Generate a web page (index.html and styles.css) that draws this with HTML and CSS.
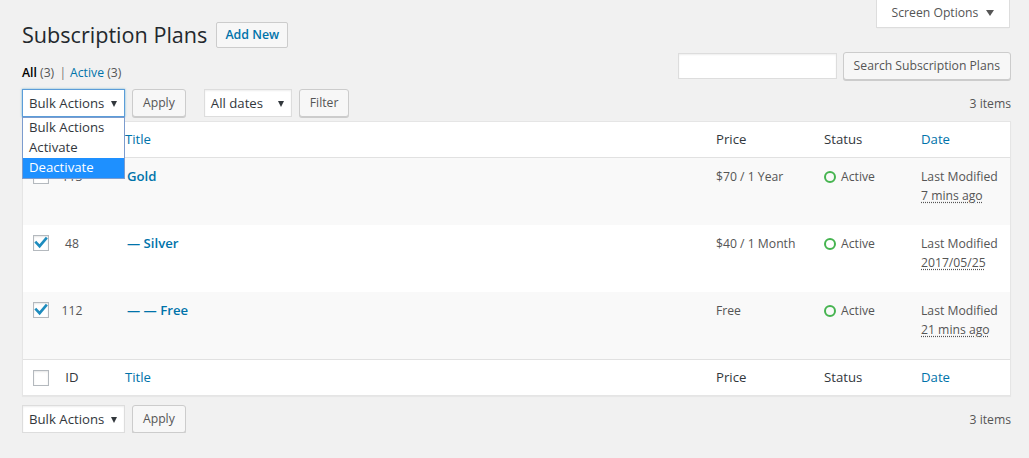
FILE: index.html
```html
<!DOCTYPE html>
<html lang="en">
<head>
<meta charset="utf-8">
<title>Subscription Plans</title>
<link rel="stylesheet" href="styles.css">
</head>
<body>
<div class="wrap">
  <header class="page-header">
    <div class="title-group">
      <h1>Subscription Plans</h1>
      <a class="page-title-action" href="#">Add New</a>
    </div>
    <button class="screen-options" type="button">Screen Options <span class="caret"></span></button>
  </header>

  <div class="filter-row">
    <ul class="subsubsub">
      <li><a class="current" href="#">All</a> <span class="count">(3)</span> <span class="sep">|</span></li>
      <li><a href="#">Active</a> <span class="count">(3)</span></li>
    </ul>
    <div class="search-box">
      <input type="search" class="search-input" aria-label="Search">
      <button class="button" type="button">Search Subscription Plans</button>
    </div>
  </div>

  <div class="tablenav top">
    <div class="actions">
      <div class="select-wrap is-open">
        <div class="select focused">Bulk Actions<span class="arrow"></span></div>
        <ul class="dropdown">
          <li>Bulk Actions</li>
          <li>Activate</li>
          <li class="highlight">Deactivate</li>
        </ul>
      </div>
      <button class="button" type="button">Apply</button>
    </div>
    <div class="actions">
      <div class="select-wrap">
        <div class="select dates">All dates<span class="arrow"></span></div>
      </div>
      <button class="button" type="button">Filter</button>
    </div>
    <div class="displaying-num">3 items</div>
  </div>

  <table class="list-table">
    <colgroup>
      <col class="c-cb"><col class="c-id"><col class="c-title"><col class="c-price"><col class="c-status"><col class="c-date">
    </colgroup>
    <thead>
      <tr>
        <th class="check-column"><span class="cb"></span></th>
        <th class="col-id">ID</th>
        <th class="col-title"><a href="#">Title</a></th>
        <th>Price</th>
        <th>Status</th>
        <th><a href="#">Date</a></th>
      </tr>
    </thead>
    <tbody>
      <tr class="alt">
        <td class="check-column"><span class="cb"></span></td>
        <td class="col-id">113</td>
        <td class="col-title"><a class="row-title" href="#">Gold</a></td>
        <td>$70 / 1 Year</td>
        <td><span class="status"><span class="ring"></span>Active</span></td>
        <td class="col-date">Last Modified<br><abbr title="2017/05/25">7 mins ago</abbr></td>
      </tr>
      <tr>
        <td class="check-column"><span class="cb checked"><svg viewBox="0 0 16 16" width="16" height="16"><path d="M3.2 7.6 L6.6 11.2 L13 3.6" fill="none" stroke="#1e8cbe" stroke-width="2.6" stroke-linecap="square"/></svg></span></td>
        <td class="col-id">48</td>
        <td class="col-title"><a class="row-title" href="#">— Silver</a></td>
        <td>$40 / 1 Month</td>
        <td><span class="status"><span class="ring"></span>Active</span></td>
        <td class="col-date">Last Modified<br><abbr title="2017/05/25">2017/05/25</abbr></td>
      </tr>
      <tr class="alt">
        <td class="check-column"><span class="cb checked"><svg viewBox="0 0 16 16" width="16" height="16"><path d="M3.2 7.6 L6.6 11.2 L13 3.6" fill="none" stroke="#1e8cbe" stroke-width="2.6" stroke-linecap="square"/></svg></span></td>
        <td class="col-id">112</td>
        <td class="col-title"><a class="row-title" href="#">— — Free</a></td>
        <td>Free</td>
        <td><span class="status"><span class="ring"></span>Active</span></td>
        <td class="col-date">Last Modified<br><abbr title="2017/05/25">21 mins ago</abbr></td>
      </tr>
    </tbody>
    <tfoot>
      <tr>
        <th class="check-column"><span class="cb"></span></th>
        <th class="col-id">ID</th>
        <th class="col-title"><a href="#">Title</a></th>
        <th>Price</th>
        <th>Status</th>
        <th><a href="#">Date</a></th>
      </tr>
    </tfoot>
  </table>

  <div class="tablenav bottom">
    <div class="actions">
      <div class="select-wrap">
        <div class="select">Bulk Actions<span class="arrow"></span></div>
      </div>
      <button class="button" type="button">Apply</button>
    </div>
    <div class="displaying-num">3 items</div>
  </div>
</div>
</body>
</html>
```

FILE: styles.css
```css
* { box-sizing: border-box; }

html, body {
  margin: 0;
  padding: 0;
  background: #f1f1f1;
}

body {
  font-family: "Open Sans", "Noto Sans", sans-serif;
  font-size: 12.2px;
  line-height: 1.4;
  color: #444;
}

a { color: #0073aa; text-decoration: none; }

.wrap {
  padding: 0 18px 0 22px;
}

/* header */
.page-header {
  display: flex;
  justify-content: space-between;
  align-items: flex-start;
}

.title-group {
  display: flex;
  align-items: center;
  gap: 9px;
  margin-top: 20px;
}

h1 {
  margin: 0;
  font-size: 21.6px;
  font-weight: 400;
  line-height: 29px;
  color: #23282d;
}

.page-title-action {
  display: inline-block;
  height: 26px;
  padding: 0 8px;
  line-height: 24px;
  border: 1px solid #ccc;
  border-radius: 2px;
  background: #f7f7f7;
  color: #0073aa;
  font-size: 12.4px;
  font-weight: 600;
}

.screen-options {
  width: 134px;
  height: 28px;
  margin-right: 1px;
  padding: 0 0 2px;
  background: #fff;
  border: 1px solid #ddd;
  border-top: 0;
  box-shadow: 0 1px 1px -1px rgba(0,0,0,.1);
  font-family: inherit;
  font-size: 12.2px;
  color: #555;
  display: flex;
  align-items: center;
  justify-content: center;
  gap: 8px;
}

.caret {
  width: 0;
  height: 0;
  border-left: 4px solid transparent;
  border-right: 4px solid transparent;
  border-top: 6px solid #555;
}

/* filter row */
.filter-row {
  display: flex;
  justify-content: space-between;
  align-items: flex-start;
  height: 28px;
  margin-top: 3px;
}

.subsubsub {
  list-style: none;
  margin: 0;
  padding: 11px 0 0;
  display: flex;
  gap: 4px;
  line-height: 20px;
  color: #666;
}

.subsubsub a.current { color: #000; font-weight: 600; }
.subsubsub .count { color: #555; }
.subsubsub .sep { color: #777; margin-left: 2px; }

.search-box {
  display: flex;
  align-items: center;
  gap: 6px;
}

.search-input {
  width: 159px;
  height: 26px;
  border: 1px solid #ddd;
  background: #fff;
  box-shadow: inset 0 1px 2px rgba(0,0,0,.07);
  font-family: inherit;
}

.button {
  height: 28px;
  padding: 0 10px 1px;
  border: 1px solid #ccc;
  border-radius: 3px;
  background: #f7f7f7;
  box-shadow: 0 1px 0 #ccc;
  color: #555;
  font-family: inherit;
  font-size: 12.2px;
  line-height: 26px;
  white-space: nowrap;
}

/* tablenav */
.tablenav {
  display: flex;
  align-items: center;
  height: 28px;
  margin-top: 9px;
}

.tablenav .actions {
  display: flex;
  align-items: center;
  gap: 7px;
  margin-right: 18px;
}

.displaying-num {
  margin-left: auto;
  padding-top: 2px;
  color: #555;
}

.select-wrap {
  position: relative;
}

.select {
  position: relative;
  width: 103px;
  height: 28px;
  padding: 0 6px;
  border: 1px solid #ddd;
  background: #fff;
  box-shadow: inset 0 1px 2px rgba(0,0,0,.07);
  color: #32373c;
  font-size: 13.2px;
  line-height: 26px;
  white-space: nowrap;
}

.select.dates { width: 88px; }

.select.focused {
  border-color: #5b9dd9;
  box-shadow: 0 0 2px rgba(30,140,190,.6);
}

.select .arrow {
  position: absolute;
  right: 7px;
  top: 11px;
  width: 0;
  height: 0;
  border-left: 3.5px solid transparent;
  border-right: 3.5px solid transparent;
  border-top: 6px solid #32373c;
}

.dropdown {
  position: absolute;
  z-index: 5;
  left: 0;
  top: 100%;
  width: 103px;
  margin: 0;
  padding: 0;
  list-style: none;
  background: #fff;
  border: 1px solid #7c9cce;
  font-size: 13.2px;
  color: #32373c;
}

.dropdown li {
  height: 20px;
  line-height: 19px;
  padding: 0 6px;
  white-space: nowrap;
}

.dropdown li.highlight {
  background: #1e90ff;
  color: #fff;
}

/* table */
.list-table {
  width: 100%;
  margin-top: 4px;
  table-layout: fixed;
  border-collapse: separate;
  border-spacing: 0;
  background: #fff;
  border: 1px solid #e5e5e5;
  box-shadow: 0 1px 1px rgba(0,0,0,.04);
}

.c-cb { width: 26px; }
.c-id { width: 66px; }
.c-price { width: 108px; }
.c-status { width: 97px; }
.c-date { width: 99px; }

.list-table th,
.list-table td {
  padding: 8px 10px;
  text-align: left;
  vertical-align: top;
}

.list-table thead th,
.list-table tfoot th {
  font-size: 13.2px;
  font-weight: 400;
  line-height: 19px;
  color: #32373c;
  height: 35px;
}

.list-table thead th { border-bottom: 1px solid #e1e1e1; padding-top: 8px; }
.list-table tfoot th { border-top: 1px solid #e1e1e1; padding-top: 8px; }

.list-table tbody tr { height: 67px; }
.list-table tbody tr.alt { background: #f9f9f9; }

.list-table td {
  line-height: 19px;
  color: #555;
  padding-top: 9px;
}

.list-table .col-date { white-space: nowrap; }

.list-table .check-column {
  padding: 10px 0 0 10px;
}

.list-table thead .check-column { padding-top: 9px; }
.list-table tfoot .check-column { padding-top: 10px; }

.list-table .col-id {
  padding-left: 0;
  padding-right: 20px;
  text-align: center;
}

.list-table th.col-title { padding-left: 10px; }
.list-table td.col-title { padding-left: 12px; }

.row-title {
  font-size: 13.2px;
  font-weight: 600;
  color: #0073aa;
}

.cb {
  display: block;
  width: 16px;
  height: 16px;
  border: 1px solid #b4b9be;
  background: #fff;
  box-shadow: inset 0 1px 2px rgba(0,0,0,.1);
  position: relative;
}

.cb svg {
  position: absolute;
  left: -1px;
  top: -1px;
}

.status {
  display: inline-flex;
  align-items: center;
  gap: 5px;
}

.ring {
  display: inline-block;
  width: 12px;
  height: 12px;
  border: 2.5px solid #46b450;
  border-radius: 50%;
}

abbr {
  text-decoration: underline dotted;
  text-underline-offset: 2px;
}

.tablenav.bottom { margin-top: 9px; }
```
